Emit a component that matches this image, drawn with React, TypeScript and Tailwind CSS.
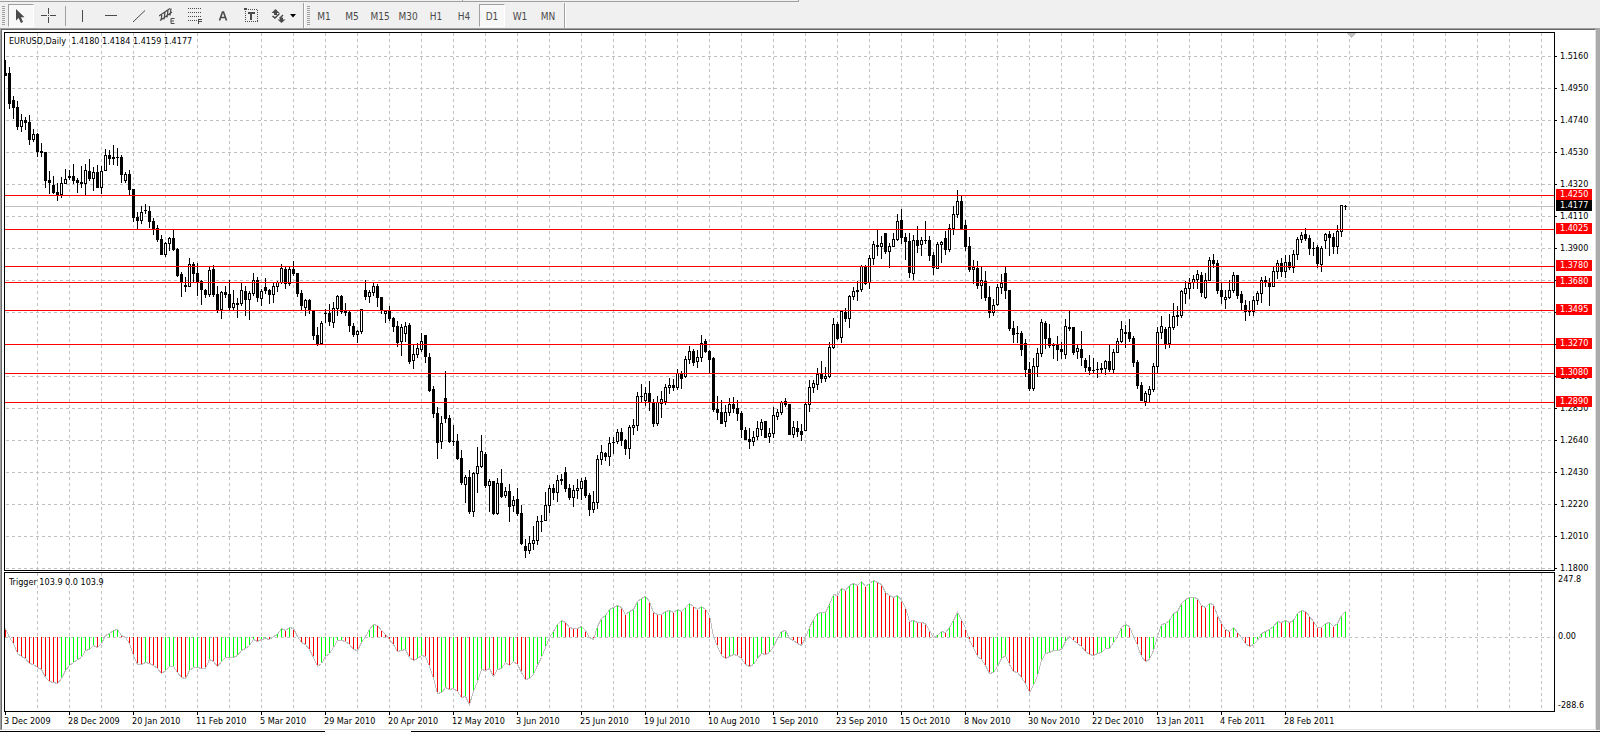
import React, { useState } from "react"

// [high, body top, body bottom, low, 1 = bullish / 0 = bearish], chart rows, one bar every 4px
const candles: number[][] = [
    [60, 73, 75, 75, 0], [67, 73, 103, 108, 0], [96, 100, 107, 118, 0], [101, 107, 126, 129, 0], [114, 120, 126, 131, 1], [117, 120, 122, 129, 0],
    [115, 122, 139, 144, 0], [129, 134, 139, 141, 1], [133, 134, 151, 156, 0], [143, 151, 152, 156, 0], [152, 152, 180, 187, 0], [171, 180, 182, 193, 0],
    [176, 185, 192, 193, 0], [183, 192, 195, 200, 0], [177, 183, 194, 197, 1], [169, 179, 183, 183, 1], [170, 176, 177, 179, 0], [164, 176, 180, 183, 0],
    [178, 180, 182, 192, 0], [166, 182, 183, 187, 0], [164, 170, 183, 194, 1], [159, 171, 178, 180, 0], [167, 172, 178, 190, 1], [165, 172, 187, 187, 0],
    [166, 171, 187, 193, 1], [149, 155, 170, 170, 1], [150, 155, 158, 164, 0], [145, 157, 158, 164, 0], [148, 157, 157, 165, 0], [155, 157, 174, 182, 0],
    [172, 174, 180, 182, 1], [170, 174, 189, 194, 0], [189, 189, 217, 221, 0], [212, 217, 220, 228, 0], [206, 212, 220, 223, 1], [204, 210, 210, 213, 0],
    [206, 211, 221, 227, 0], [218, 221, 228, 234, 0], [225, 228, 239, 241, 0], [235, 239, 254, 254, 0], [242, 243, 254, 256, 1], [237, 238, 243, 250, 1],
    [230, 238, 249, 250, 0], [248, 249, 275, 276, 0], [272, 274, 281, 296, 0], [277, 285, 286, 291, 0], [258, 264, 286, 286, 1], [262, 264, 273, 281, 0],
    [263, 273, 281, 295, 0], [280, 281, 289, 304, 0], [289, 290, 294, 297, 0], [267, 270, 294, 296, 1], [265, 269, 294, 296, 0], [286, 294, 309, 312, 0],
    [291, 292, 309, 318, 1], [286, 292, 294, 297, 0], [280, 294, 307, 309, 0], [290, 303, 307, 309, 1], [298, 303, 304, 317, 0], [283, 290, 303, 305, 1],
    [286, 291, 299, 315, 0], [291, 293, 299, 319, 1], [273, 280, 293, 295, 1], [277, 280, 297, 301, 0], [289, 291, 298, 305, 1], [278, 287, 290, 293, 0],
    [289, 290, 294, 303, 0], [283, 286, 294, 302, 1], [281, 282, 286, 291, 1], [264, 268, 282, 283, 1], [267, 269, 283, 288, 0], [266, 269, 283, 285, 1],
    [261, 269, 273, 275, 0], [273, 273, 293, 296, 0], [290, 293, 305, 309, 0], [299, 300, 307, 315, 1], [299, 300, 309, 313, 0], [310, 310, 335, 339, 0],
    [327, 335, 344, 345, 0], [321, 323, 343, 343, 1], [309, 313, 313, 322, 0], [304, 313, 321, 325, 0], [302, 308, 322, 327, 1], [295, 296, 308, 315, 1],
    [295, 296, 311, 313, 0], [303, 311, 312, 315, 0], [311, 312, 325, 331, 0], [323, 326, 334, 336, 0], [330, 331, 334, 342, 1], [309, 309, 331, 333, 1],
    [280, 290, 296, 299, 0], [290, 292, 296, 302, 1], [282, 286, 292, 295, 1], [284, 286, 297, 306, 0], [297, 297, 310, 313, 0], [310, 311, 313, 322, 1],
    [306, 311, 318, 320, 0], [317, 318, 326, 331, 0], [321, 326, 342, 346, 0], [324, 327, 341, 355, 1], [322, 326, 333, 341, 1], [323, 325, 361, 363, 0],
    [345, 354, 360, 368, 1], [343, 348, 354, 357, 1], [333, 341, 349, 351, 1], [335, 335, 356, 362, 0], [353, 357, 390, 391, 0], [386, 389, 413, 417, 0],
    [407, 413, 442, 458, 0], [416, 423, 441, 448, 1], [371, 398, 418, 422, 0], [415, 418, 441, 442, 0], [425, 441, 441, 445, 0], [434, 441, 458, 459, 0],
    [450, 458, 482, 484, 0], [475, 477, 484, 502, 1], [470, 477, 511, 513, 0], [472, 473, 511, 516, 1], [447, 466, 473, 492, 1], [435, 451, 466, 467, 1],
    [452, 454, 485, 487, 0], [479, 481, 485, 511, 1], [481, 481, 513, 514, 0], [478, 483, 513, 514, 1], [469, 483, 496, 497, 0], [487, 491, 495, 497, 1],
    [484, 491, 506, 521, 0], [496, 500, 505, 511, 1], [488, 499, 513, 515, 0], [505, 513, 543, 544, 0], [539, 546, 550, 557, 0], [536, 543, 550, 553, 1],
    [526, 540, 543, 549, 1], [516, 521, 540, 544, 1], [515, 521, 521, 531, 0], [492, 505, 520, 520, 1], [485, 488, 505, 512, 1], [484, 488, 492, 499, 0],
    [475, 480, 492, 501, 1], [474, 479, 480, 484, 0], [467, 472, 488, 491, 0], [484, 488, 497, 499, 0], [485, 490, 497, 506, 1], [479, 488, 490, 498, 1],
    [478, 481, 488, 499, 1], [477, 480, 495, 497, 0], [493, 495, 509, 515, 0], [491, 502, 509, 512, 1], [455, 459, 502, 508, 1], [445, 452, 459, 464, 1],
    [452, 453, 456, 460, 0], [437, 443, 456, 465, 1], [437, 442, 442, 453, 0], [429, 432, 441, 443, 1], [428, 432, 440, 445, 0], [439, 440, 448, 454, 0],
    [425, 427, 448, 458, 1], [419, 425, 427, 434, 1], [392, 396, 425, 430, 1], [384, 396, 396, 401, 0], [387, 393, 400, 405, 1], [381, 393, 402, 410, 0],
    [399, 402, 423, 426, 0], [396, 402, 423, 425, 1], [391, 399, 403, 417, 1], [384, 387, 401, 404, 1], [378, 385, 387, 393, 1], [379, 385, 387, 390, 0],
    [369, 373, 387, 389, 1], [371, 373, 378, 388, 0], [356, 359, 376, 377, 1], [346, 351, 359, 363, 1], [349, 351, 362, 365, 0], [350, 357, 361, 367, 1],
    [335, 343, 357, 361, 1], [339, 341, 351, 352, 0], [350, 351, 359, 373, 0], [357, 358, 409, 411, 0], [396, 409, 412, 419, 0], [400, 412, 423, 423, 0],
    [405, 412, 421, 426, 1], [398, 404, 412, 415, 1], [397, 404, 408, 412, 0], [400, 408, 413, 420, 0], [411, 413, 429, 437, 0], [427, 430, 439, 439, 0],
    [428, 439, 441, 448, 0], [431, 437, 441, 445, 1], [421, 428, 436, 439, 1], [419, 422, 429, 435, 1], [421, 421, 437, 437, 0], [428, 433, 436, 442, 1],
    [407, 415, 433, 437, 1], [409, 412, 416, 419, 1], [401, 402, 412, 414, 1], [398, 401, 404, 406, 0], [404, 404, 434, 434, 0], [421, 427, 434, 437, 1],
    [421, 428, 431, 436, 0], [424, 431, 434, 440, 0], [403, 404, 430, 430, 1], [380, 387, 404, 411, 1], [380, 383, 387, 392, 1], [368, 374, 384, 389, 1],
    [361, 374, 378, 382, 0], [367, 376, 378, 381, 1], [342, 347, 376, 377, 1], [318, 324, 347, 348, 1], [322, 324, 338, 339, 0], [310, 311, 337, 342, 1],
    [308, 312, 318, 321, 0], [295, 296, 318, 327, 1], [287, 291, 296, 299, 1], [281, 290, 291, 300, 0], [265, 266, 289, 291, 1], [265, 266, 283, 284, 0],
    [255, 258, 282, 288, 1], [241, 244, 258, 264, 1], [230, 245, 246, 255, 0], [236, 243, 246, 258, 1], [233, 233, 251, 253, 0], [243, 246, 251, 267, 1],
    [233, 239, 246, 246, 1], [214, 221, 239, 240, 1], [209, 220, 237, 243, 0], [233, 237, 241, 259, 0], [233, 241, 272, 277, 0], [235, 240, 273, 279, 1],
    [226, 240, 245, 252, 0], [237, 240, 244, 255, 1], [221, 240, 240, 243, 0], [236, 240, 255, 260, 0], [252, 255, 267, 274, 0], [242, 244, 268, 268, 1],
    [241, 242, 244, 262, 1], [231, 238, 249, 254, 0], [224, 228, 249, 251, 1], [206, 214, 228, 234, 1], [190, 201, 214, 217, 1], [195, 201, 229, 229, 0],
    [220, 225, 246, 250, 0], [237, 246, 269, 271, 0], [260, 267, 269, 283, 1], [261, 268, 285, 288, 0], [267, 280, 285, 298, 1], [271, 281, 297, 300, 0],
    [286, 297, 312, 317, 0], [299, 305, 312, 315, 1], [284, 287, 304, 305, 1], [274, 283, 287, 293, 1], [267, 273, 290, 298, 0], [290, 290, 328, 330, 0],
    [321, 328, 334, 342, 0], [326, 333, 333, 342, 0], [331, 333, 349, 355, 0], [339, 343, 369, 376, 0], [362, 369, 388, 390, 0], [358, 366, 388, 390, 1],
    [348, 353, 366, 376, 1], [319, 322, 353, 356, 1], [321, 323, 338, 348, 0], [324, 338, 345, 347, 0], [343, 345, 345, 358, 0], [336, 345, 349, 360, 0],
    [342, 349, 351, 358, 0], [319, 326, 354, 358, 1], [311, 327, 328, 330, 0], [327, 327, 352, 354, 0], [344, 348, 351, 358, 1], [331, 349, 357, 365, 0],
    [358, 360, 367, 371, 0], [355, 367, 370, 374, 0], [358, 370, 370, 373, 0], [362, 369, 369, 377, 0], [363, 368, 369, 372, 0], [360, 361, 368, 374, 1],
    [345, 361, 369, 371, 0], [349, 352, 369, 373, 1], [338, 341, 352, 352, 1], [321, 329, 341, 342, 1], [325, 332, 333, 347, 0], [319, 332, 338, 341, 0],
    [336, 338, 362, 366, 0], [360, 362, 385, 388, 0], [382, 385, 400, 400, 0], [391, 393, 401, 405, 1], [386, 389, 394, 401, 1], [363, 366, 389, 391, 1],
    [327, 332, 366, 373, 1], [316, 326, 332, 338, 1], [327, 329, 344, 348, 0], [314, 327, 343, 347, 1], [303, 316, 327, 329, 1], [306, 315, 316, 325, 0],
    [290, 291, 315, 317, 1], [281, 288, 293, 303, 1], [278, 283, 288, 298, 1], [275, 279, 282, 288, 1], [270, 274, 279, 288, 1], [272, 275, 292, 296, 0],
    [273, 280, 297, 298, 1], [257, 260, 280, 280, 1], [254, 260, 263, 267, 0], [260, 263, 290, 293, 0], [283, 290, 296, 303, 0], [290, 297, 299, 308, 1],
    [280, 290, 297, 298, 1], [272, 275, 290, 292, 1], [275, 275, 295, 298, 0], [291, 294, 302, 309, 0], [300, 305, 311, 320, 0], [301, 310, 311, 315, 0],
    [296, 300, 311, 315, 1], [291, 293, 300, 304, 1], [277, 280, 293, 302, 1], [276, 280, 281, 286, 0], [278, 282, 286, 305, 0], [267, 271, 286, 286, 1],
    [260, 263, 271, 278, 1], [258, 263, 271, 276, 0], [255, 262, 271, 277, 1], [255, 262, 267, 269, 0], [250, 254, 267, 272, 1], [237, 239, 254, 259, 1],
    [232, 235, 239, 242, 1], [228, 234, 238, 240, 0], [235, 238, 248, 254, 0], [242, 248, 248, 255, 0], [245, 247, 263, 267, 0], [246, 248, 264, 271, 1],
    [233, 234, 240, 248, 1], [231, 234, 237, 255, 0], [233, 237, 246, 253, 0], [225, 231, 246, 253, 1], [205, 205, 231, 236, 1], [205, 206, 206, 209, 0],
];

const trigger: number[] = [
    9, 0, -6, -17, -20, -22, -27, -28, -31, -33, -41, -45, -47, -48, -42, -34, -29, -26, -23, -21, -13, -12, -8, -10, -6, 2, 4, 7, 8, 2,
    0, -6, -19, -28, -28, -26, -27, -29, -32, -37, -34, -30, -30, -36, -41, -42, -34, -31, -31, -32, -32, -23, -25, -30, -25, -21, -21, -21, -19, -13,
    -11, -8, -2, -4, -2, -1, -2, 1, 3, 9, 7, 10, 9, 1, -5, -7, -12, -21, -30, -27, -20, -17, -10, -3, -3, -4, -7, -12, -13, -5,
    1, 8, 13, 12, 7, 3, -2, -7, -14, -13, -12, -21, -24, -22, -19, -20, -30, -42, -58, -57, -52, -54, -53, -56, -62, -61, -69, -56, -45, -33,
    -34, -32, -40, -33, -32, -26, -29, -25, -28, -36, -43, -42, -38, -29, -21, -10, 0, 6, 13, 18, 15, 10, 9, 9, 11, 7, 0, -2, 11, 20,
    23, 29, 31, 33, 31, 24, 27, 29, 37, 40, 42, 37, 26, 24, 24, 27, 28, 26, 29, 27, 31, 35, 32, 29, 32, 29, 23, 1, -9, -19,
    -22, -20, -18, -19, -22, -28, -30, -28, -22, -17, -18, -15, -9, -1, 6, 7, -1, -3, -6, -8, 0, 10, 19, 25, 26, 26, 34, 44, 43, 51,
    49, 54, 56, 54, 58, 53, 56, 59, 57, 55, 47, 43, 41, 43, 38, 31, 17, 18, 16, 16, 14, 7, 0, 2, 6, 5, 10, 18, 26, 19,
    9, -3, -10, -20, -23, -29, -37, -36, -30, -22, -19, -28, -35, -36, -41, -48, -57, -50, -39, -24, -17, -15, -13, -13, -12, -4, 1, -3, -6, -9,
    -14, -18, -19, -17, -15, -11, -11, -5, 1, 10, 13, 11, 1, -8, -20, -25, -23, -13, 1, 13, 14, 18, 25, 27, 35, 39, 41, 41, 40, 33,
    31, 35, 34, 23, 14, 8, 6, 10, 5, 0, -6, -9, -7, -3, 4, 6, 8, 11, 17, 15, 18, 16, 18, 25, 28, 27, 22, 17, 10, 10,
    14, 16, 11, 14, 23, 27,
];

const priceScale = [
    "1.5160", "1.4950", "1.4740", "1.4530", "1.4320", "1.4110", "1.3900", "1.3690", "1.3480",
    "1.3270", "1.3060", "1.2850", "1.2640", "1.2430", "1.2220", "1.2010", "1.1800",
];

const levels = [
    { price: "1.4250", y: 195 },
    { price: "1.4025", y: 229 },
    { price: "1.3780", y: 266 },
    { price: "1.3680", y: 282 },
    { price: "1.3495", y: 310 },
    { price: "1.3270", y: 344 },
    { price: "1.3080", y: 373 },
    { price: "1.2890", y: 402 },
];

const bid = { price: "1.4177", y: 206 };

const dates = [
    "3 Dec 2009", "28 Dec 2009", "20 Jan 2010", "11 Feb 2010", "5 Mar 2010", "29 Mar 2010", "20 Apr 2010",
    "12 May 2010", "3 Jun 2010", "25 Jun 2010", "19 Jul 2010", "10 Aug 2010", "1 Sep 2010", "23 Sep 2010",
    "15 Oct 2010", "8 Nov 2010", "30 Nov 2010", "22 Dec 2010", "13 Jan 2011", "4 Feb 2011", "28 Feb 2011",
];

const timeframes = ["M1", "M5", "M15", "M30", "H1", "H4", "D1", "W1", "MN"];

const TOP = 33;
const ZERO = 64;
const columns = Array.from({ length: 90 }, (_, i) => 32 + i * 32);

const Grip = () => (
    <svg width="3" height="20" className="shrink-0" shapeRendering="crispEdges">
        {Array.from({ length: 10 }, (_, i) => (
            <rect key={i} x="0" y={i * 2} width="3" height="1" fill="#a0a0a0" />
        ))}
    </svg>
)

const ToolButton = (props: any) => (
    <button
        type="button"
        aria-label={props.label}
        aria-pressed={props.active}
        onClick={props.returnClick}
        className={
            "mx-px flex h-[23px] shrink-0 items-center justify-center border pt-px text-[10px] text-[#4a4a4a] " +
            (props.wide ? "w-9 " : "w-[26px] ") +
            (props.active ? "border-t-[#a0a0a0] border-l-[#a0a0a0] border-r-white border-b-white bg-[#f8f8f8]" : "border-transparent")
        }
    >
        {props.children}
    </button>
)

const Icon = (props: any) => (
    <svg width={props.width || 16} height="16" viewBox={`0 0 ${props.width || 16} 16`} fill="none" stroke="#4a4a4a" shapeRendering={props.smooth ? "auto" : "crispEdges"}>
        {props.children}
    </svg>
)

const tools = [
    {
        label: "Vertical line",
        icon: <Icon><path d="M7.5 2v12" /></Icon>
    },
    {
        label: "Horizontal line",
        icon: <Icon><path d="M2 7.5h12" /></Icon>
    },
    {
        label: "Trendline",
        icon: <Icon smooth><path d="M2 14L14 2.500" strokeWidth="1" /></Icon>
    },
    {
        label: "Equidistant channel",
        icon: (
            <Icon smooth>
                <path d="M0 8L11 0.500M1 12.500L13 4M3 5.500l-1 7M6 4l-1 7.500M9 2.500l-1 7M12 0.500l-1 7" strokeWidth="1.200" />
                <path d="M15.500 10.500h-3.500v5h3.500M12 13h3" strokeWidth="1" />
            </Icon>
        )
    },
    {
        label: "Fibonacci retracement",
        icon: (
            <Icon>
                <path d="M1 0.500h14M1 4.500h14M1 8.500h14M1 12.500h9" strokeDasharray="1 1" />
                <path d="M15 11.500h-3.500v4.500M12 13.500h3" />
            </Icon>
        )
    },
    {
        label: "Text",
        icon: <Icon smooth><path d="M4.500 12.500L7.500 4h1L11.500 12.500M6 9.500h4" strokeWidth="1.600" /></Icon>
    },
    {
        label: "Text label",
        icon: (
            <Icon>
                <path d="M2.500 1.500h12v12h-12z" strokeDasharray="1 1" />
                <path d="M1 0.500h3M1 1.500h3" />
                <path d="M5 4.500h7M5 5.500h7M8.500 6v6M7.500 6v6" />
            </Icon>
        )
    },
]

const Toolbar = () => {
    const [timeframe, setTimeframe] = useState<string>("D1");
    const [cursor, setCursor] = useState<string>("cursor");

    return (
        <header className="bg-[#f0f0f0]">
            <div className="flex h-[3px]">
                <div className="h-[2px] w-[462px] border-b border-[#a0a0a0]" />
                <div className="h-[2px] w-[337px] border-x border-b border-[#a0a0a0]" />
            </div>
            <div className="flex h-[25px]">
                <div className="flex items-center border-r border-[#a0a0a0] pl-[2px]">
                    <Grip />
                    <div className="w-[2px]" />
                    <ToolButton label="Cursor" active={cursor === "cursor"} returnClick={() => setCursor("cursor")}>
                        <Icon smooth>
                            <path d="M3 1v11.500l2.700-2.400 2.200 5 2.200-1-2.200-4.800H11.500z" fill="#4a4a4a" stroke="none" />
                        </Icon>
                    </ToolButton>
                    <ToolButton label="Crosshair" active={cursor === "crosshair"} returnClick={() => setCursor("crosshair")}>
                        <Icon>
                            <path d="M7.500 0v6M7.500 9v6M0 7.500h6M9 7.500h6M7 7.500h1" />
                        </Icon>
                    </ToolButton>
                    <div className="mr-[3px] ml-[2px] h-[20px] w-px bg-[#a0a0a0]" />
                    {tools.map((tool) => (
                        <ToolButton key={tool.label} label={tool.label}>{tool.icon}</ToolButton>
                    ))}
                    <ToolButton label="Arrows" wide>
                        <Icon width={26} smooth>
                            <g fill="#4a4a4a" stroke="none">
                                <path d="M4.500 1L8.500 5H6v2H3V5H0.500z" />
                                <path d="M10.500 15L6.500 11.500H9V9.500h3v2h2.500z" />
                                <path d="M1 8.500l1-1 2 1.500 4-4 1 1-5 5z" />
                                <path d="M8 10l3.500-3.500 1 1L9 11z" />
                                <path d="M19 6h6l-3 3.500z" fill="#000" />
                            </g>
                        </Icon>
                    </ToolButton>
                </div>
                <div className="flex items-center border-r border-l border-r-[#a0a0a0] border-l-white pl-[2px]">
                    <Grip />
                    <nav className="flex pr-[2px]">
                        {timeframes.map((name) => (
                            <ToolButton key={name} label={name} active={timeframe === name} returnClick={() => setTimeframe(name)}>
                                {name}
                            </ToolButton>
                        ))}
                    </nav>
                </div>
                <div className="w-px bg-white" />
            </div>
        </header>
    )
}

const Columns = (props: any) => (
    <g stroke="#c0c0c0" strokeDasharray="3 3">
        {columns.map((x) => (
            <line key={x} x1={x + 0.5} x2={x + 0.5} y1="0" y2={props.height} />
        ))}
    </g>
)

const PriceChart = () => (
    <svg className="block h-[537px] w-full" shapeRendering="crispEdges" role="img" aria-label="EURUSD daily candles">
        <Columns height={537} />
        <g stroke="#c0c0c0" strokeDasharray="3 3">
            {priceScale.map((price, i) => (
                <line key={price} x1="1" x2="100%" y1={23.5 + i * 32} y2={23.5 + i * 32} />
            ))}
        </g>
        <line x1="0" x2="100%" y1={bid.y - TOP + 0.5} y2={bid.y - TOP + 0.5} stroke="#c0c0c0" />
        <path d="M1342 0h9l-4.500 5z" fill="#c0c0c0" />
        {candles.map(([high, top, bottom, low, up], i) => (
            <g key={i}>
                <rect x={i * 4} y={high - TOP} width="1" height={low - high + 1} />
                <rect x={i * 4 - 1} y={top - TOP} width="3" height={bottom - top + 1} />
                {up === 1 && bottom - top > 1 && (
                    <rect x={i * 4} y={top - TOP + 1} width="1" height={bottom - top - 1} fill="#fff" />
                )}
            </g>
        ))}
        <g stroke="#ff0000">
            {levels.map((level) => (
                <line key={level.price} x1="0" x2="100%" y1={level.y - TOP + 0.5} y2={level.y - TOP + 0.5} />
            ))}
        </g>
    </svg>
)

const TriggerChart = () => {
    const rows = trigger.map((value) => ZERO - Math.round(value * 0.968));
    let rising = false;

    return (
        <svg className="block h-[138px] w-full" shapeRendering="crispEdges" role="img" aria-label="Trigger histogram">
            <Columns height={138} />
            <line x1="0" x2="100%" y1={ZERO + 0.5} y2={ZERO + 0.5} stroke="#c0c0c0" strokeDasharray="3 3" />
            {trigger.map((value, i) => {
                // flat bars keep the colour of the one before
                if (i > 0 && value !== trigger[i - 1]) rising = value > trigger[i - 1];

                return (
                    <line
                        key={i}
                        x1={i * 4 + 0.5}
                        x2={i * 4 + 0.5}
                        y1={rows[i]}
                        y2={ZERO}
                        stroke={rising ? "#00ff00" : "#ff0000"}
                    />
                )
            })}
            <polyline points={rows.map((y, i) => `${i * 4 + 0.5},${y + 0.5}`).join(" ")} fill="none" stroke="#c0c0c0" />
        </svg>
    )
}

const Badge = (props: any) => (
    <span
        className={"absolute left-px flex h-[11px] w-9 items-center pl-1 leading-[11px] text-white " + (props.dark ? "bg-black" : "bg-[#ff0000]")}
        style={{ top: props.y - 38 }}
    >
        {props.price}
    </span>
)

const App = () => {
    return (
        <div className="flex flex-col bg-white font-['DejaVu_Sans_Condensed','DejaVu_Sans',sans-serif] text-[9px] font-stretch-condensed text-black">
            <Toolbar />
            <div className="flex bg-[#ababab] pr-1">
                <main className="min-w-0 flex-1 border-t border-l border-[#a0a0a0]">
                    <div className="border-t border-r border-b border-l border-t-[#696969] border-r-[#e3e3e3] border-b-[#e3e3e3] border-l-[#696969] bg-white pt-[2px] pl-[2px]">
                        <section className="flex">
                            <div className="relative min-w-0 flex-1 overflow-hidden border border-black">
                                <PriceChart />
                                <p className="absolute top-[2px] left-1 leading-3 whitespace-pre">EURUSD,Daily  1.4180 1.4184 1.4159 1.4177</p>
                            </div>
                            <div className="relative w-10 shrink-0">
                                <ul className="h-0 pt-[9px]">
                                    {priceScale.map((price) => (
                                        <li key={price} className="flex h-8 items-center gap-[3px]">
                                            <span className="-mt-px h-px w-[2px] bg-black" />
                                            {price}
                                        </li>
                                    ))}
                                </ul>
                                {levels.map((level) => (
                                    <Badge key={level.price} price={level.price} y={level.y} />
                                ))}
                                <Badge price={bid.price} y={bid.y} dark />
                            </div>
                        </section>
                        <section className="mt-px flex">
                            <div className="relative min-w-0 flex-1 overflow-hidden border border-black">
                                <TriggerChart />
                                <p className="absolute top-[3px] left-1 leading-3">Trigger 103.9 0.0 103.9</p>
                            </div>
                            <div className="flex w-10 shrink-0 flex-col justify-between pt-px pb-px pl-[3px] leading-3">
                                <span>247.8</span>
                                <span className="mb-3">0.00</span>
                                <span>-288.6</span>
                            </div>
                        </section>
                        <ol className="flex h-[17px] overflow-hidden">
                            {dates.map((date) => (
                                <li key={date} className="w-16 shrink-0 whitespace-nowrap">
                                    <div className="ml-px h-[3px] w-px bg-black" />
                                    <div className="leading-3">{date}</div>
                                </li>
                            ))}
                        </ol>
                    </div>
                </main>
            </div>
            <footer className="flex h-[2px] items-end">
                <div className="h-px w-[325px] bg-black" />
                <div className="h-px w-[86px] bg-white" />
                <div className="h-px flex-1 bg-black" />
            </footer>
        </div>
    )
}

export default App;
